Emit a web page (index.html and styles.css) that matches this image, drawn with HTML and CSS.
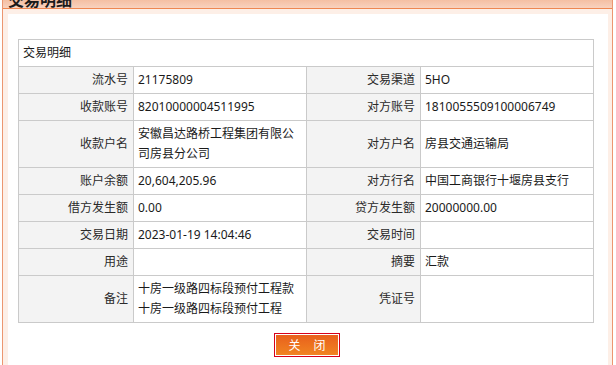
FILE: index.html
```html
<!DOCTYPE html>
<html lang="zh-CN">
<head>
<meta charset="utf-8">
<title>交易明细</title>
<link rel="stylesheet" href="styles.css">
</head>
<body>
<div class="dialog">
  <div class="titlebar"><div class="title-text">交易明细</div></div>
  <div class="dialog-body">
    <div class="panel">
      <table class="detail">
        <colgroup>
          <col class="c-label"><col class="c-value"><col class="c-label2"><col class="c-value">
        </colgroup>
        <tr><td class="head" colspan="4">交易明细</td></tr>
        <tr><td class="lbl">流水号</td><td class="val">21175809</td><td class="lbl">交易渠道</td><td class="val">5HO</td></tr>
        <tr><td class="lbl">收款账号</td><td class="val">82010000004511995</td><td class="lbl">对方账号</td><td class="val">1810055509100006749</td></tr>
        <tr><td class="lbl">收款户名</td><td class="val">安徽昌达路桥工程集团有限公司房县分公司</td><td class="lbl">对方户名</td><td class="val">房县交通运输局</td></tr>
        <tr><td class="lbl">账户余额</td><td class="val">20,604,205.96</td><td class="lbl">对方行名</td><td class="val">中国工商银行十堰房县支行</td></tr>
        <tr><td class="lbl">借方发生额</td><td class="val">0.00</td><td class="lbl">贷方发生额</td><td class="val">20000000.00</td></tr>
        <tr><td class="lbl">交易日期</td><td class="val">2023-01-19 14:04:46</td><td class="lbl">交易时间</td><td class="val"></td></tr>
        <tr><td class="lbl">用途</td><td class="val"></td><td class="lbl">摘要</td><td class="val">汇款</td></tr>
        <tr><td class="lbl">备注</td><td class="val">十房一级路四标段预付工程款<br>十房一级路四标段预付工程</td><td class="lbl">凭证号</td><td class="val"></td></tr>
      </table>
      <div class="actions">
        <button class="btn-close" type="button">关闭</button>
      </div>
    </div>
  </div>
</div>
</body>
</html>
```
FILE: styles.css
```css
html, body {
  margin: 0;
  padding: 0;
  height: 100%;
  overflow: hidden;
  background: #ffffff;
}

body {
  font-family: "Noto Sans", "Noto Sans CJK SC", sans-serif;
  font-size: 12px;
  color: #222;
}

.dialog {
  margin-left: 2px;
  width: 609px;
  border-left: 1px solid #ec9670;
  border-right: 1px solid #ec9670;
  background: #fdefe7;
  height: 380px;
}

.titlebar {
  height: 8px;
  overflow: hidden;
  background: linear-gradient(#f4bfa3, #f8d2bf);
  border-bottom: 1px solid #ee8752;
}

.title-text {
  margin-top: -9px;
  padding-left: 5px;
  font-size: 16px;
  line-height: 16px;
  font-weight: bold;
  color: #1a1a1a;
  font-family: "Noto Sans CJK SC", sans-serif;
}

.dialog-body {
  padding: 5px 4px 0 5px;
}

.panel {
  background: #ffffff;
  height: 360px;
  padding-top: 25px;
  box-sizing: border-box;
}

.detail {
  margin-left: 10px;
  width: 576px;
  border-collapse: collapse;
  table-layout: fixed;
  border: 1px solid #c8c8c8;
}

.c-label { width: 115px; }
.c-label2 { width: 114px; }
.c-value { width: 173px; }

.detail td {
  border: 1px solid #cacaca;
  padding: 3px 4px 3px 4px;
  line-height: 20px;
  vertical-align: middle;
  word-break: break-all;
}

.detail td.head {
  text-align: left;
  background: #fff;
  color: #1a1a1a;
}

.detail td.lbl {
  background: #f3f3f3;
  text-align: right;
  padding-right: 5px;
  color: #2a2a2a;
}

.detail td.val {
  background: #fff;
  text-align: left;
  color: #1a1a1a;
}

.actions {
  padding-top: 10px;
  padding-left: 266px;
}

.btn-close {
  display: block;
  width: 66px;
  height: 24px;
  margin: 0;
  padding: 0 0 0 13px;
  border: 1px solid #d8001a;
  box-shadow: inset 0 0 0 1px #ffffff;
  background: linear-gradient(#e85e1c, #f18622);
  color: #ffffff;
  font-family: "Noto Sans CJK SC", sans-serif;
  font-size: 12px;
  letter-spacing: 13px;
  line-height: 20px;
  text-align: center;
  cursor: pointer;
}
```
